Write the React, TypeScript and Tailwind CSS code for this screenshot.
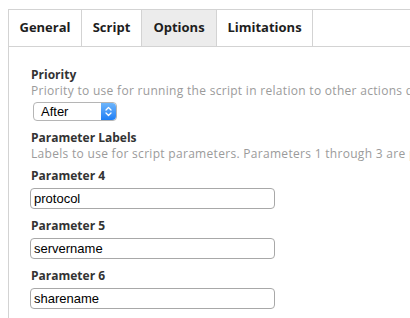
const tabs = [
  { label: "General", w: "w-[73px]", active: false },
  { label: "Script", w: "w-[60px]", active: false },
  { label: "Options", w: "w-[75px]", active: true },
  { label: "Limitations", w: "w-[96px]", active: false },
];

const params = [
  { label: "Parameter 4", value: "protocol" },
  { label: "Parameter 5", value: "servername" },
  { label: "Parameter 6", value: "sharename" },
];

function Stepper() {
  return (
    <div className="h-full w-[15px] rounded-r-[4px] bg-gradient-to-b from-[#6db5fb] to-[#1c7ef5] flex items-center justify-center">
      <svg width="7" height="11" viewBox="0 0 7 11" fill="none" stroke="white" strokeWidth="1.3" strokeLinecap="round" strokeLinejoin="round">
        <path d="M1 4 L3.5 1.5 L6 4" />
        <path d="M1 7 L3.5 9.5 L6 7" />
      </svg>
    </div>
  );
}

export default function App() {
  return (
    <div className="w-[410px] h-[318px] bg-white pl-2 pt-[9px] overflow-hidden font-['Open_Sans',sans-serif]">
      <div className="flex h-[38px] border-t border-b border-l border-[#d3d3d3]">
        {tabs.map((tab) => (
          <div
            key={tab.label}
            className={`${tab.w} flex items-center justify-center border-r border-[#d3d3d3] text-[13px] font-bold text-[#1e1e1e] ${tab.active ? "bg-[#ececec]" : "bg-white"}`}
          >
            {tab.label}
          </div>
        ))}
      </div>

      <div className="border-l border-[#d3d3d3] h-full pl-[22px] pt-[20px]">
        <div className="text-[12px] leading-[16px] font-bold text-[#333]">Priority</div>
        <div className="text-[12px] leading-[16px] tracking-[0.3px] text-[#9b9b9b] whitespace-nowrap">
          Priority to use for running the script in relation to other actions during a policy run
        </div>
        <div className="mt-[3px] ml-[2px] w-[84px] h-[19px] flex items-stretch rounded-[4px] border border-[#b5b5b5] bg-white">
          <div className="flex-1 flex items-center pl-[7px] text-[13px] text-black font-['Liberation_Sans',sans-serif]">
            After
          </div>
          <Stepper />
        </div>

        <div className="mt-[9px] text-[12px] leading-[16px] font-bold text-[#333]">Parameter Labels</div>
        <div className="text-[12px] leading-[16px] tracking-[0.3px] text-[#9b9b9b] whitespace-nowrap">
          Labels to use for script parameters. Parameters 1 through 3 are predefined
        </div>

        {params.map((p) => (
          <div key={p.label} className="mt-[6px] mb-[9px]">
            <div className="text-[12px] leading-[16px] font-bold text-[#333]">{p.label}</div>
            <div className="mt-[4px] -ml-[1px] w-[245px] h-[21px] flex items-center rounded-[4px] border border-[#a8a8a8] pl-[3px] text-[13px] text-black font-['Liberation_Sans',sans-serif]">
              {p.value}
            </div>
          </div>
        ))}
      </div>
    </div>
  );
}
